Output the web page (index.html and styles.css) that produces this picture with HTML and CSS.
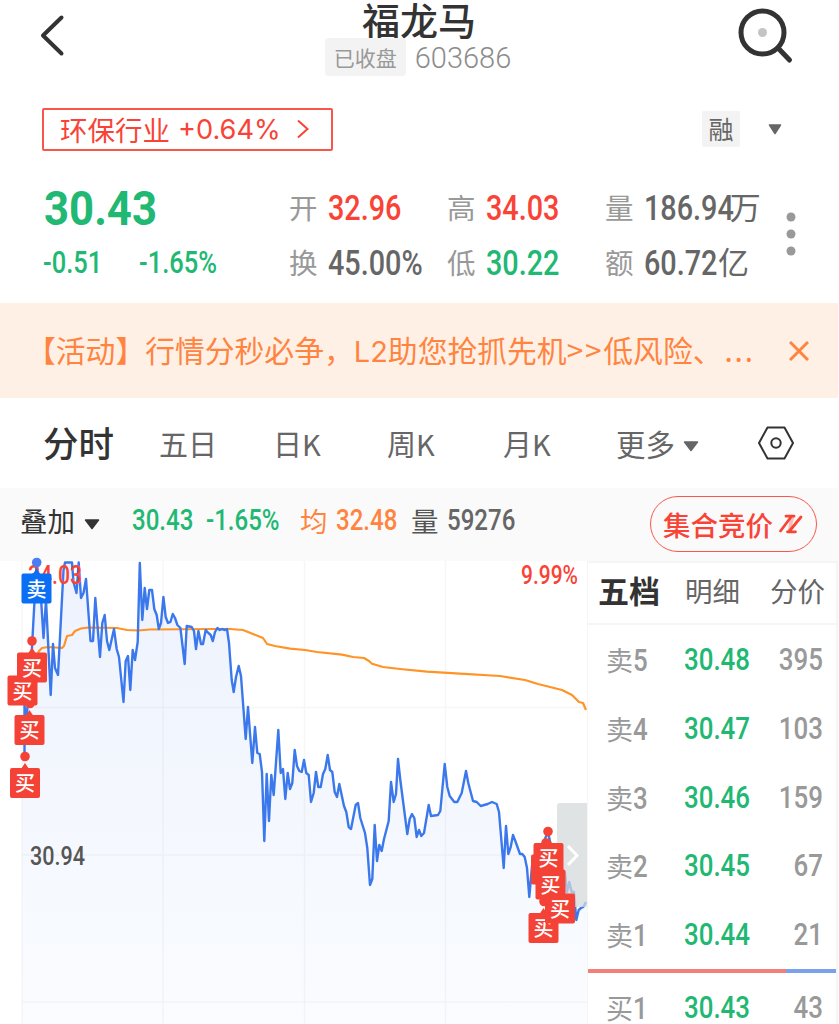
FILE: index.html
```
<!DOCTYPE html>
<html lang="zh-CN">
<head>
    <meta charset="UTF-8">
    <meta name="viewport" content="width=device-width, initial-scale=1.0">
    <title>福龙马 603686</title>
    <link rel="stylesheet" href="styles.css">
</head>
<body>
<div class="app">
    <header class="header">
        <svg class="back" width="30" height="46" viewBox="0 0 30 46"><path d="M23.500 4.500 5 22.500l18.500 18" fill="none" stroke="#333" stroke-width="4" stroke-linecap="round" stroke-linejoin="round"/></svg>
        <div class="title">
            <h1>福龙马</h1>
            <div class="code"><span class="status">已收盘</span><span>603686</span></div>
        </div>
        <svg class="search" width="58" height="58" viewBox="0 0 58 58">
            <circle cx="25.500" cy="26.500" r="21.500" fill="none" stroke="#333" stroke-width="5"/>
            <circle cx="25.500" cy="26.500" r="4.500" fill="#c4c4c4"/>
            <path d="M42 43 52.500 54" stroke="#333" stroke-width="5" stroke-linecap="round"/>
        </svg>
    </header>

    <div class="sector-row">
        <a class="sector">环保行业 <span class="sector-pct">+0.64%</span>
            <svg width="14" height="22" viewBox="0 0 14 22"><path d="M2 2.500 11.500 11 2 19.500" fill="none" stroke="#f94336" stroke-width="2"/></svg>
        </a>
        <span class="rong">融</span>
        <svg class="arrow" width="14" height="11" viewBox="0 0 14 11"><path d="M1.500 1h11L7 9.500z" fill="#666" stroke="#666" stroke-width="1.500" stroke-linejoin="round"/></svg>
    </div>

    <!-- 行情数据 -->
    <section class="quote">
        <div class="price-box">
            <div class="price"><span class="num">30.43</span></div>
            <div class="change"><span class="num">-0.51</span><span class="num">-1.65%</span></div>
        </div>
        <dl class="stats">
            <div><dt>开</dt><dd class="num red">32.96</dd></div>
            <div><dt>高</dt><dd class="num red">34.03</dd></div>
            <div><dt>量</dt><dd class="wide"><span class="num">186.94</span><i>万</i></dd></div>
            <div><dt>换</dt><dd class="num">45.00%</dd></div>
            <div><dt>低</dt><dd class="num green">30.22</dd></div>
            <div><dt>额</dt><dd class="wide"><span class="num">60.72</span><i>亿</i></dd></div>
        </dl>
        <svg class="dots" width="10" height="46" viewBox="0 0 10 46" fill="#999"><circle cx="5" cy="6" r="4.500"/><circle cx="5" cy="23" r="4.500"/><circle cx="5" cy="40" r="4.500"/></svg>
    </section>

    <div class="notice">
        <p>【活动】行情分秒必争，<span class="latin">L2</span>助您抢抓先机<span class="gt">&gt;&gt;</span>低风险、<span class="more">...</span></p>
        <svg width="20" height="20" viewBox="0 0 20 20"><path d="M1 1l18 18M19 1 1 19" stroke="#ff8440" stroke-width="3"/></svg>
    </div>

    <nav class="tabs">
        <span class="active">分时</span>
        <span>五日</span>
        <span>日K</span>
        <span>周K</span>
        <span>月K</span>
        <span>更多<svg class="arrow" width="16" height="11" viewBox="0 0 16 11"><path d="M1.500 1h13L8 9.500z" fill="#666" stroke="#666" stroke-width="1.500" stroke-linejoin="round"/></svg></span>
        <svg class="setting" width="38" height="34" viewBox="0 0 38 34" fill="none" stroke="#333" stroke-width="2">
            <path d="M10.500 1.500h17L36 17l-8.500 15.500h-17L2 17z" stroke-linejoin="round"/><circle cx="19" cy="17" r="4.700"/>
        </svg>
    </nav>

    <div class="info-bar">
        <span class="overlay">叠加<svg width="16" height="11" viewBox="0 0 16 11"><path d="M1.500 1h13L8 9.500z" fill="#333" stroke="#333" stroke-width="1.500" stroke-linejoin="round"/></svg></span>
        <span class="num green last">30.43</span>
        <span class="num green pct">-1.65%</span>
        <span class="avg">均</span>
        <span class="num avg avg-num">32.48</span>
        <span class="vol">量</span>
        <span class="num vol-num">59276</span>
        <a class="auction">集合竞价<svg width="26" height="20" viewBox="0 0 26 20"><path d="M2.500 17 13 3M8 2.200h8M11.500 17 23 3M9.500 17.800h8" fill="none" stroke="#f94336" stroke-width="2.800" stroke-linecap="round"/><path d="M12.500 2h4L12.500 18h-3z" fill="#f94336" fill-opacity=".35"/></svg></a>
    </div>

    <main class="main">
        <div class="chart">
            <svg width="587" height="463" viewBox="0 561 587 463">
                <defs>
                    <linearGradient id="area" x1="0" y1="0" x2="0" y2="1">
                        <stop offset="0" stop-color="#edf2fd"/>
                        <stop offset="1" stop-color="#fafcff"/>
                    </linearGradient>
                    <g id="flag">
                        <path d="M-4-14 0-20 4-14z"/>
                        <rect x="-15" y="-15" width="30" height="30" rx="2"/>
                    </g>
                </defs>
                <path fill="url(#area)" d="M22 1024V752H24L25 705 32 647 34 610 36.700 563 40.500 590 43.500 638 46 600 50.700 695 53 644 55 668 58 675 63.500 570 65 562.500H72L73.500 582 76.500 593 78.700 562.500 81 598 83.500 593 86 579 90.500 641H93L95.300 598 100 657 102.300 623 104.700 615 107 641 109.300 650 114 629 116.700 649 119 657 123.500 702 125.700 661 128 656 130.300 690 132.700 650 135 660 137.700 642 139.800 563 142.300 620 144.700 588 147 609 149.300 590H152L154.300 609 156.700 615 158.800 629 161 623 163.400 597 165.700 617 168 623 170.400 622 172.800 614 175 618 177.400 625 180.400 628 184.700 664 186.700 626 191.700 627 194 631 196 649 198.400 631 201 644H203L205.700 630 208.400 633 210.700 635 212.800 641 215 632 217.400 628 219.700 630 222 629 225 630 227 629 229 643 231.700 680 233.700 692 236 677 238.700 666 241 676 245.700 739 248 707 252.300 763 255 727 257.300 753 259.700 754 262 772 264.300 841 266.700 774 269 821 271.300 775 273.700 795 278.300 730 280.700 773 283 769 285.300 799 287.700 773 290 789 292.300 783 294.700 750 297 766 299.300 771 301.700 772 304 760 306.300 773 308.700 775 311 802 313.700 793 316 772 318.300 787H320.700L323 774 325.300 769 327.700 755 330 770 332.300 772 334.700 792 337 797 339.300 784 344 806 346.300 812 348.700 827 351 829 355.700 805 358 803 360.300 818 365 833 367.300 848 370 885 372.300 879 374.700 825 377 861 379.300 845 381.700 851 384 839 388.700 821 391 782 393.700 802 396 794 398 759 400.300 780 407.300 834 409.700 819 412 814 414.300 818 416.700 837 419 830 421.300 836 424 833 428.700 805 431 816 438 815 440.300 811 444.700 764 447.300 787 449.700 796 454.300 802H457.300L461.700 793 466 771 468.300 783 473 801 476.700 802 480.700 806 487.700 804 492 802 496.700 804 499 812 503.700 868 506 826 508.300 854 510.700 847 513 835 515.300 841 520 854H522.300L524.700 857 527 868 529.300 897 532 866 548 832 565 873 567 892 569.300 882 571.700 892H574L576.300 920 578.700 910 581 908 583.300 907 587 902V1024z"/>
                <!-- 网格 -->
                <path d="M22 561V1024M163 561V1024M304.500 561V1024M445.500 561V1024M22 707.500H587M22 855H587M22 1002H587" fill="none" stroke="#000" stroke-opacity=".035" stroke-width="1.500"/>
                <!-- 均价线 -->
                <path fill="none" stroke="#ff9326" stroke-width="2.200" stroke-linejoin="round" d="M38 653 39 651 42 648 48 647 62 648 64 646 67 636 72 635 75 631 81 628.500 88 627.500 117 628 127 630 138 630.500 150 629.500 213 629 230 629 243 630 253 634 263 638 267 644 275 646 290 648.700 305 650 317 652 342 654.700 353 657 364 658 369 661 372 663.700 383 667 400 669 427 671.700 460 673.700 500 676 525 680 538 684 550 687 562 690 572 695 579 702 583 703 586 710"/>
                <!-- 分时线 -->
                <path fill="none" stroke="#3b78ec" stroke-width="2.400" stroke-linejoin="round" d="M24.500 752V705L26 720 29 695 32 647 34 610 36.700 563 40.500 590 43.500 638 46 600 50.700 695 53 644 55 668 58 675 63.500 570 65 562.500H72L73.500 582 76.500 593 78.700 562.500 81 598 83.500 593 86 579 90.500 641H93L95.300 598 100 657 102.300 623 104.700 615 107 641 109.300 650 114 629 116.700 649 119 657 123.500 702 125.700 661 128 656 130.300 690 132.700 650 135 660 137.700 642 139.800 563 142.300 620 144.700 588 147 609 149.300 590H152L154.300 609 156.700 615 158.800 629 161 623 163.400 597 165.700 617 168 623 170.400 622 172.800 614 175 618 177.400 625 180.400 628 184.700 664 186.700 626 191.700 627 194 631 196 649 198.400 631 201 644H203L205.700 630 208.400 633 210.700 635 212.800 641 215 632 217.400 628 219.700 630 222 629 225 630 227 629 229 643 231.700 680 233.700 692 236 677 238.700 666 241 676 245.700 739 248 707 252.300 763 255 727 257.300 753 259.700 754 262 772 264.300 841 266.700 774 269 821 271.300 775 273.700 795 278.300 730 280.700 773 283 769 285.300 799 287.700 773 290 789 292.300 783 294.700 750 297 766 299.300 771 301.700 772 304 760 306.300 773 308.700 775 311 802 313.700 793 316 772 318.300 787H320.700L323 774 325.300 769 327.700 755 330 770 332.300 772 334.700 792 337 797 339.300 784 344 806 346.300 812 348.700 827 351 829 355.700 805 358 803 360.300 818 365 833 367.300 848 370 885 372.300 879 374.700 825 377 861 379.300 845 381.700 851 384 839 388.700 821 391 782 393.700 802 396 794 398 759 400.300 780 407.300 834 409.700 819 412 814 414.300 818 416.700 837 419 830 421.300 836 424 833 428.700 805 431 816 438 815 440.300 811 444.700 764 447.300 787 449.700 796 454.300 802H457.300L461.700 793 466 771 468.300 783 473 801 476.700 802 480.700 806 487.700 804 492 802 496.700 804 499 812 503.700 868 506 826 508.300 854 510.700 847 513 835 515.300 841 520 854H522.300L524.700 857 527 868 529.300 897 532 866 540 850 548 832 556 870 565 873 567 892 569.300 882 571.700 892H574L576.300 920 578.700 910 581 908 583.300 907 586 902"/>
                <path d="M587 803h-27q-3 0-3 3v98q0 3 3 3h27z" fill="#d4d9d9" fill-opacity=".75"/>
                <path d="M568 846l9 9.500-9 9.500" fill="none" stroke="#fff" stroke-width="3"/>
                <g class="axis">
                    <text class="red" x="28" y="583.500" textLength="54" lengthAdjust="spacingAndGlyphs">34.03</text>
                    <text class="red" x="521" y="583.500" textLength="57" lengthAdjust="spacingAndGlyphs">9.99%</text>
                    <text x="30" y="865" textLength="55" lengthAdjust="spacingAndGlyphs">30.94</text>
                </g>
                <!-- 买卖点 -->
                <g class="sell">
                    <circle cx="36.700" cy="562.500" r="4.800" fill="#4a7ef5"/>
                    <use href="#flag" x="36.500" y="588.500"/><text x="36.500" y="596.500">卖</text>
                </g>
                <g class="buy">
                    <circle cx="30" cy="703.500" r="4.800"/>
                    <use href="#flag" x="22.500" y="690.500"/><text x="22.500" y="698.500">买</text>
                    <circle cx="32" cy="641" r="4.800"/>
                    <use href="#flag" x="32" y="667.500"/><text x="32" y="675.500">买</text>
                    <use href="#flag" x="29.500" y="730"/><text x="29.500" y="738">买</text>
                    <circle cx="25" cy="756.500" r="4.800"/>
                    <use href="#flag" x="25" y="783"/><text x="25" y="791">买</text>
                    <circle cx="548" cy="831.500" r="4.800"/>
                    <circle cx="546" cy="843" r="4.800"/>
                    <use href="#flag" x="543.500" y="928"/><text x="543.500" y="936">买</text>
                    <circle cx="544" cy="901.500" r="4.800"/>
                    <use href="#flag" x="546" y="869.500"/>
                    <use href="#flag" x="550.500" y="884.500"/><text x="550.500" y="892.500">买</text>
                    <use href="#flag" x="560" y="908.500"/><text x="560" y="916.500">买</text>
                    <use href="#flag" x="548.500" y="858"/><text x="548.500" y="866">买</text>
                </g>
            </svg>
        </div>

        <aside class="book">
            <div class="book-tabs"><span class="active">五档</span><span>明细</span><span>分价</span></div>
            <div class="row"><span>卖<b class="num">5</b></span><b class="num green">30.48</b><b class="num qty">395</b></div>
            <div class="row"><span>卖<b class="num">4</b></span><b class="num green">30.47</b><b class="num qty">103</b></div>
            <div class="row"><span>卖<b class="num">3</b></span><b class="num green">30.46</b><b class="num qty">159</b></div>
            <div class="row"><span>卖<b class="num">2</b></span><b class="num green">30.45</b><b class="num qty">67</b></div>
            <div class="row"><span>卖<b class="num">1</b></span><b class="num green">30.44</b><b class="num qty">21</b></div>
            <div class="ratio"></div>
            <div class="row buy-row"><span>买<b class="num">1</b></span><b class="num green">30.43</b><b class="num qty">43</b></div>
        </aside>
    </main>
</div>
</body>
</html>
```
FILE: styles.css
```
* {
    box-sizing: border-box;
}
body {
    margin: 0;
    background: #fff;
    font-family: "Noto Sans CJK SC", sans-serif;
    color: #333;
}
svg {
    flex: none;
}
.app {
    width: 838px;
    height: 1024px;
    overflow: hidden;
    white-space: nowrap;
}
/* narrow figures */
.num {
    display: inline-block;
    font-family: Roboto, sans-serif;
    font-weight: 500;
    transform: scaleX(.835);
    transform-origin: left center;
}
.red {
    color: #f94336;
    fill: #f94336;
}
.green {
    color: #21b873;
}

.header {
    display: grid;
    grid-template-columns: 100px 1fr 100px;
    height: 90px;
}
.back {
    margin: 13px 0 0 38px;
}
.search {
    margin: 6px 0 0 -1px;
}
.title {
    text-align: center;
}
.title h1 {
    margin: 0;
    font-size: 38px;
    line-height: 38px;
    font-weight: 500;
}
.code {
    display: flex;
    justify-content: center;
    gap: 9px;
    margin-right: 2px;
    font: 300 29px/40px Roboto, sans-serif;
    color: #8c8c8c;
}
.status {
    height: 38px;
    padding: 0 9px;
    border-radius: 4px;
    background: #f3f3f3;
    font: 400 21px/38px "Noto Sans CJK SC", sans-serif;
    color: #999;
}

.sector-row {
    display: flex;
    align-items: center;
    height: 78px;
    padding: 0 56px 0 42px;
}
.sector {
    display: flex;
    align-items: center;
    width: 291px;
    height: 43px;
    margin-right: auto;
    padding-left: 16px;
    border: 2px solid #f9564a;
    border-radius: 2px;
    font-size: 27.500px;
    line-height: 36px;
    color: #f94336;
}
.sector-pct {
    margin: 0 15px 0 8px;
    font: 400 27.200px Inter, sans-serif;
}
.rong {
    width: 38px;
    height: 36px;
    margin-right: 28px;
    border-radius: 2px;
    background: #f3f3f3;
    font-size: 25px;
    line-height: 35px;
    text-align: center;
    color: #666;
}

.quote {
    display: flex;
    height: 135px;
    padding: 14px 0 0 43px;
}
.price-box {
    width: 246px;
    color: #21b873;
}
.price {
    height: 54px;
    padding-left: 1px;
    font-size: 47.500px;
    line-height: 45px;
}
.price .num {
    font-weight: 700;
    transform: scaleX(.92);
}
.change {
    display: flex;
    font-size: 30.500px;
    line-height: 54px;
}
.change .num {
    width: 96px;
}
.stats {
    display: grid;
    grid-template-columns: 158px 158px 180px;
    grid-auto-rows: 55px;
    margin: 0;
}
.stats div {
    display: flex;
    line-height: 53px;
}
.stats dt {
    width: 39px;
    font-size: 28.500px;
    line-height: 50px;
    color: #999;
}
.stats dd {
    margin: 0;
    font-size: 34.500px;
    color: #666;
}
.stats .red {
    color: #f94336;
}
.stats .green {
    color: #21b873;
}
.stats .wide {
    display: flex;
}
.wide .num {
    margin-right: -.51em;
}
.wide:has(.num) i {
    font-style: normal;
    font-size: 31px;
    line-height: 48px;
}
.stats div:nth-child(3) .num {
    margin-right: -22px;
}
.stats div:nth-child(6) .num {
    margin-right: -14px;
}
.dots {
    margin: 29px 0 0 1px;
}

.notice {
    display: flex;
    align-items: center;
    height: 95px;
    padding: 0 29px 0 26px;
    background: #fff0e6;
    color: #ff8440;
}
.notice p {
    flex: 1;
    margin: 0 0 3px;
    font-size: 29.800px;
}
.latin {
    font-family: Inter, sans-serif;
    font-size: 29px;
}
.gt {
    letter-spacing: 1.800px;
}
.more {
    margin-left: 2px;
    letter-spacing: 1.800px;
}

.tabs {
    display: flex;
    align-items: center;
    height: 90px;
    padding-left: 43px;
    font-size: 29px;
    color: #666;
}
.tabs span {
    width: 114px;
}
.tabs .active {
    width: 116px;
    margin-bottom: 3px;
    font-size: 35.500px;
    font-weight: 500;
    color: #333;
}
.tabs span:nth-child(4) {
    width: 116px;
}
.tabs span:nth-child(5) {
    width: 113px;
}
.tabs span:nth-child(6) {
    width: 141px;
    font-size: 29.500px;
}
.tabs .arrow {
    margin-left: 8px;
    vertical-align: 4px;
}

.info-bar {
    display: flex;
    align-items: center;
    height: 73px;
    padding: 0 21px 8px 20px;
    background: #fafafa;
    font-size: 27.500px;
}
.info-bar > span {
    margin-bottom: 2px;
}
.info-bar .num {
    flex: none;
    font-size: 28.800px;
}
.overlay {
    width: 112px;
    flex: none;
}
.overlay svg {
    margin-left: 9px;
    vertical-align: 2px;
}
.last {
    width: 74px;
}
.pct {
    width: 94px;
}
.avg {
    width: 36px;
    color: #ff8440;
}
.avg-num {
    width: 75px;
}
.vol {
    width: 36px;
    color: #555;
}
.vol-num {
    color: #666;
}
.auction {
    display: flex;
    align-items: center;
    gap: 5px;
    height: 56px;
    margin: 7px 0 0 auto;
    padding: 0 12px 1px;
    border: 1.500px solid #f9564a;
    border-radius: 28px;
    font-weight: 500;
    color: #f94336;
}

.main {
    display: flex;
    height: 463px;
}
.chart svg {
    display: block;
    overflow: visible;
}
.axis text {
    font: 500 26px Roboto, sans-serif;
}
.axis text:last-child {
    fill: #555;
}
.sell,
.buy {
    text-anchor: middle;
    font-size: 20px;
    font-weight: 500;
}
.sell {
    fill: #0a6ff5;
}
.buy {
    fill: #f54236;
}
.sell text,
.buy text {
    fill: #fff;
}

.book {
    width: 251px;
    border: solid #f5f5f5;
    border-width: 2px 2px 0 1px;
}
.book-tabs {
    display: flex;
    align-items: center;
    height: 62px;
    padding: 0 0 7px 10px;
    border-bottom: 2px solid #f5f5f5;
    font-size: 27.500px;
    color: #666;
}
.book-tabs span {
    width: 85px;
    flex: none;
}
.book-tabs span:last-child {
    width: 60px;
}
.book-tabs .active {
    width: 87px;
    font-size: 31px;
    font-weight: 700;
    color: #333;
}
.row {
    display: grid;
    grid-template-columns: 78px 1fr 60px;
    height: 68.800px;
    padding: 0 14px 0 18px;
    font-size: 27px;
    line-height: 70px;
    color: #999;
}
.row .num {
    font-size: 31px;
}
.row .qty {
    text-align: right;
    transform-origin: right center;
}
.ratio {
    height: 4px;
    background: linear-gradient(90deg, #f08078 80%, #7ba0ec 80%);
}
.buy-row {
    height: 50px;
}
```
